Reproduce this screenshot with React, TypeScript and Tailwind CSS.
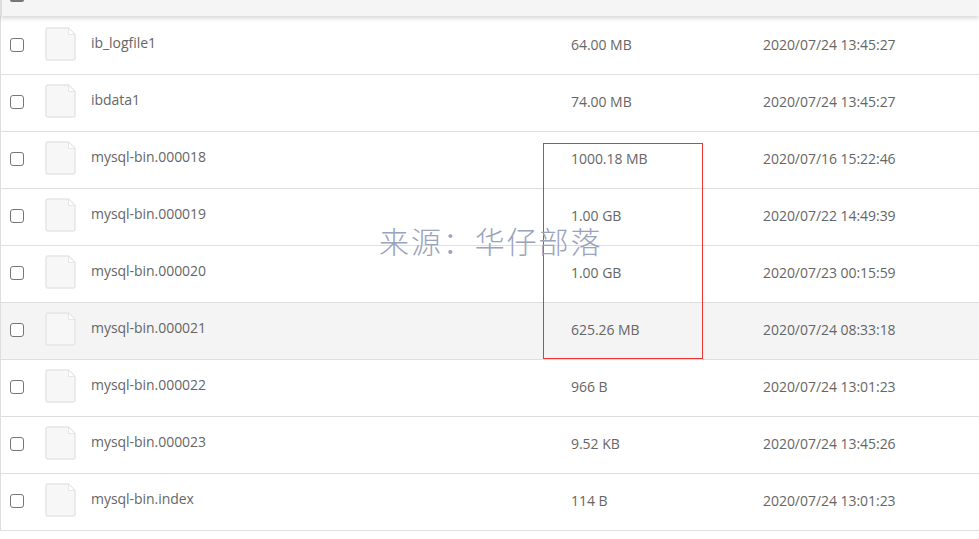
const rows = [
  { name: "ib_logfile1", size: "64.00 MB", date: "2020/07/24 13:45:27" },
  { name: "ibdata1", size: "74.00 MB", date: "2020/07/24 13:45:27" },
  { name: "mysql-bin.000018", size: "1000.18 MB", date: "2020/07/16 15:22:46" },
  { name: "mysql-bin.000019", size: "1.00 GB", date: "2020/07/22 14:49:39" },
  { name: "mysql-bin.000020", size: "1.00 GB", date: "2020/07/23 00:15:59" },
  { name: "mysql-bin.000021", size: "625.26 MB", date: "2020/07/24 08:33:18", active: true },
  { name: "mysql-bin.000022", size: "966 B", date: "2020/07/24 13:01:23" },
  { name: "mysql-bin.000023", size: "9.52 KB", date: "2020/07/24 13:45:26" },
  { name: "mysql-bin.index", size: "114 B", date: "2020/07/24 13:01:23" },
];

function FileIcon() {
  return (
    <svg width="31" height="34" viewBox="0 0 31 34" className="shrink-0">
      <path
        d="M3 1H23.5L30 7.5V31a2 2 0 0 1-2 2H3a2 2 0 0 1-2-2V3a2 2 0 0 1 2-2Z"
        fill="#f7f7f7"
        stroke="#e6e6e6"
        strokeWidth="1.5"
      />
      <path d="M23.5 1V7.5H30Z" fill="#ffffff" stroke="#e6e6e6" strokeWidth="1" />
    </svg>
  );
}

function Checkbox() {
  return <div className="mt-[-2px] h-[14px] w-[14px] shrink-0 rounded-[3px] border border-[#767676] bg-white" />;
}

export default function App() {
  return (
    <div className="relative h-[539px] w-[979px] overflow-hidden bg-white font-['Open_Sans','Noto_Sans_CJK_SC',sans-serif] text-[14px] tracking-[-0.04px] text-[#666666]">
      <div className="relative z-10 h-[16px] border-l-2 border-[#dedede] bg-[#f5f5f5] pl-[8px] shadow-[0_2px_5px_rgba(0,0,0,0.18)]">
        <div className="h-[2px] w-[14px] rounded-b-[2px] bg-[#777777]" />
      </div>
      <div className="border-l border-[#dedede]">
        {rows.map((row, i) => (
          <div
            key={row.name}
            className={`flex items-center border-b border-[#dedede] pl-[9px] ${i === 0 ? "h-[59px] pt-[2px]" : "h-[57px]"} ${row.active ? "bg-[#f4f4f4]" : "bg-white"}`}
          >
            <Checkbox />
            <div className="ml-[21px] mt-[-5px]">
              <FileIcon />
            </div>
            <div className="ml-[15px] mt-[-7px] w-[480px] truncate">{row.name}</div>
            <div className="mt-[-3px] w-[192px]">{row.size}</div>
            <div className="mt-[-3px]">{row.date}</div>
          </div>
        ))}
      </div>
      <div className="absolute left-[543px] top-[143px] h-[216px] w-[160px] border border-[#ee3333]" />
      <div className="absolute left-[379px] top-[222px] whitespace-nowrap font-['Noto_Sans_CJK_SC',serif] text-[30px] font-light leading-[36px] tracking-[1.9px] text-[#9aa3bd]">
        来源：华仔部落
      </div>
    </div>
  );
}
